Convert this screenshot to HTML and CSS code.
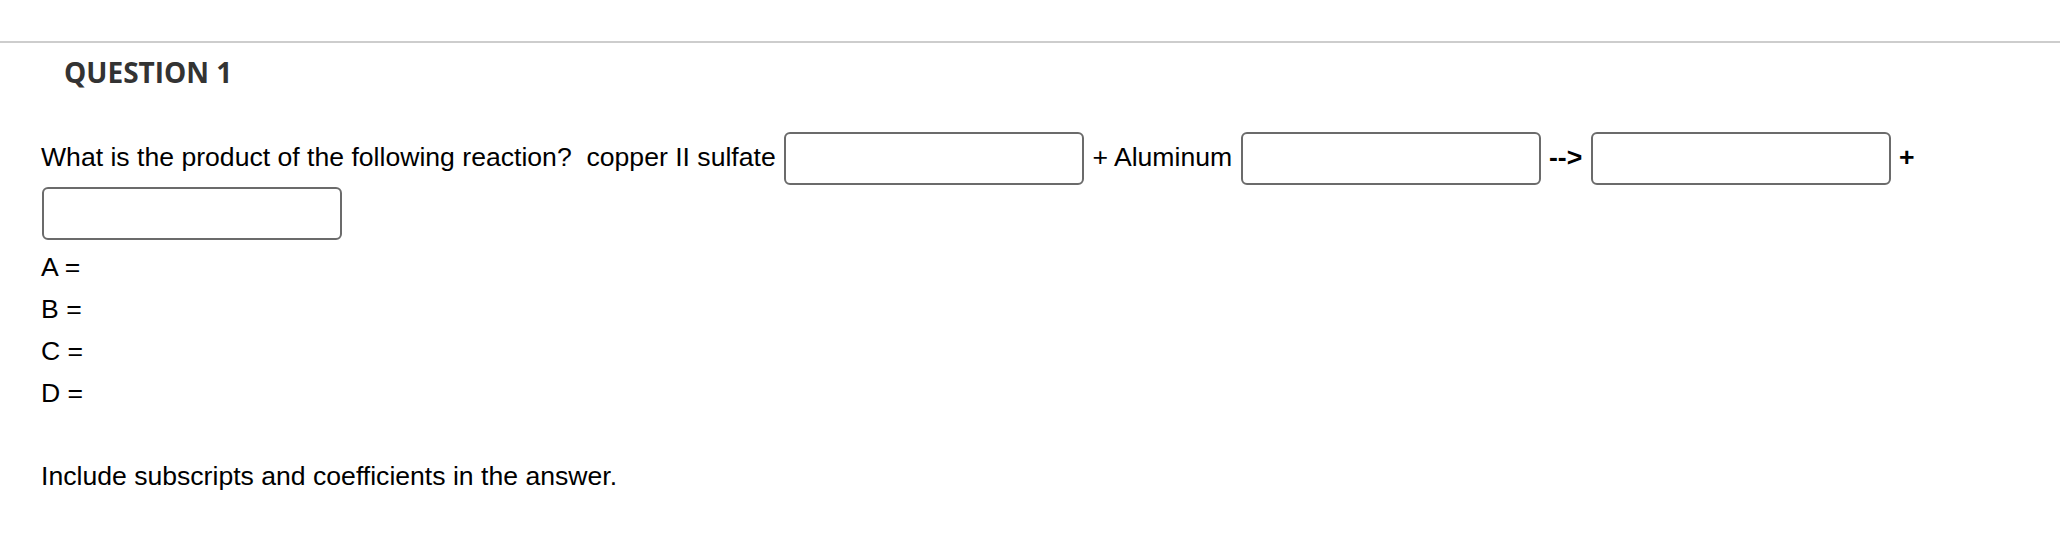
FILE: index.html
```html
<!DOCTYPE html>
<html>
<head>
<meta charset="utf-8">
<link rel="stylesheet" href="styles.css">
</head>
<body>
<div class="topbar"></div>
<h2 class="heading">QUESTION 1</h2>
<div class="question">
  <div class="reaction">What is the product of the following reaction?&nbsp; copper II sulfate <input class="blank" type="text"> + Aluminum <input class="blank" type="text"> <b>--&gt;</b> <input class="blank" type="text"> <b>+</b> <input class="blank" type="text"></div>
  <div class="vars">
    <div class="var">A =</div>
    <div class="var">B =</div>
    <div class="var">C =</div>
    <div class="var">D =</div>
  </div>
  <div class="note">Include subscripts and coefficients in the answer.</div>
</div>
</body>
</html>
```

FILE: styles.css
```css
html, body {
  margin: 0;
  padding: 0;
  background: #ffffff;
}

body {
  font-family: "Liberation Sans", Arial, sans-serif;
  font-size: 26.6px;
  color: #000000;
}

.topbar {
  height: 41px;
  border-bottom: 2px solid #cdcdcd;
}

.heading {
  margin: 10px 0 0 64px;
  font-family: "Open Sans", sans-serif;
  font-weight: 700;
  font-size: 28px;
  line-height: 38px;
  color: #333333;
}

.question {
  margin: 40px 0 0 41px;
}

.reaction {
  line-height: normal;
}

.reaction b {
  font-weight: 700;
}

.blank {
  box-sizing: border-box;
  width: 300px;
  height: 53px;
  margin: 1px 1px;
  padding: 0 8px;
  border: 2px solid #6b6b6b;
  border-radius: 6px;
  background: #ffffff;
  vertical-align: middle;
  font: inherit;
}

.vars {
  margin-top: 5px;
}

.var {
  line-height: 42px;
}

.note {
  margin-top: 41px;
  line-height: 42px;
}
```
